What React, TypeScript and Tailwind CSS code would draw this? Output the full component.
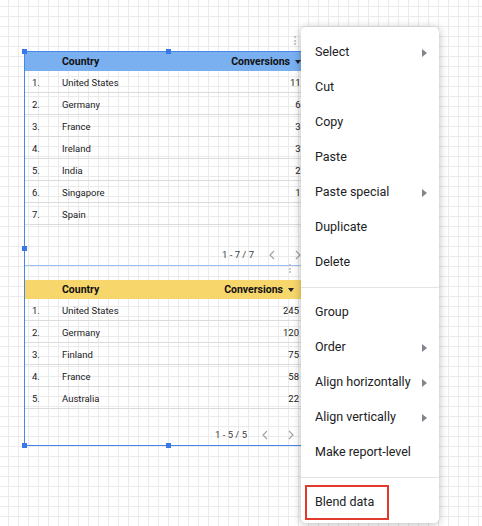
import React from "react";

type Row = { name: string; value: string };

const tableOne: Row[] = [
  { name: "United States", value: "114" },
  { name: "Germany", value: "63" },
  { name: "France", value: "35" },
  { name: "Ireland", value: "31" },
  { name: "India", value: "27" },
  { name: "Singapore", value: "12" },
  { name: "Spain", value: "8" },
];

const tableTwo: Row[] = [
  { name: "United States", value: "245" },
  { name: "Germany", value: "120" },
  { name: "Finland", value: "75" },
  { name: "France", value: "58" },
  { name: "Australia", value: "22" },
];

const menuTop = [
  { label: "Select", sub: true },
  { label: "Cut" },
  { label: "Copy" },
  { label: "Paste" },
  { label: "Paste special", sub: true },
  { label: "Duplicate" },
  { label: "Delete" },
];

const menuMid = [
  { label: "Group" },
  { label: "Order", sub: true },
  { label: "Align horizontally", sub: true },
  { label: "Align vertically", sub: true },
  { label: "Make report-level" },
];

function SortArrow() {
  return (
    <svg width="6" height="4" viewBox="0 0 6 4" className="ml-[5px]">
      <path d="M0 0h6L3 4z" fill="#202124" />
    </svg>
  );
}

function Chevron({ dir }: { dir: "left" | "right" }) {
  return (
    <svg width="6" height="10" viewBox="0 0 6 10">
      <path
        d={dir === "left" ? "M5 1L1 5l4 4" : "M1 1l4 4-4 4"}
        fill="none"
        stroke="#9aa0a6"
        strokeWidth="1.1"
      />
    </svg>
  );
}

function Handle() {
  return <div className="w-[5px] h-[5px] bg-[#3b78e7]" />;
}

function DragDots() {
  return (
    <div className="flex flex-col gap-[1.5px]">
      <div className="w-[2px] h-[2px] rounded-full bg-[#b8b8b8]" />
      <div className="w-[2px] h-[2px] rounded-full bg-[#b8b8b8]" />
      <div className="w-[2px] h-[2px] rounded-full bg-[#b8b8b8]" />
    </div>
  );
}

function DataTable({
  rows,
  headerBg,
  width,
  gapAfterRows,
  range,
}: {
  rows: Row[];
  headerBg: string;
  width: string;
  gapAfterRows: string;
  range: string;
}) {
  return (
    <div className={width}>
      {/* HEADER */}
      <div className={`flex items-center h-[19px] pr-[11px] ${headerBg}`}>
        <div className="w-[37px]" />
        <div className="flex-1 text-[10.5px] font-bold text-[#111]">Country</div>
        <div className="flex items-center text-[10.5px] font-bold text-[#111]">
          Conversions
          <SortArrow />
        </div>
      </div>

      {/* ROWS */}
      {rows.map((r, i) => (
        <div
          key={r.name}
          className="flex items-center h-[22px] pt-[3px] border-b border-[#dcdcdc] text-[9.5px] text-[#202124] pr-[6px]"
        >
          <div className="w-[37px] pl-[7px]">{i + 1}.</div>
          <div className="flex-1">{r.name}</div>
          <div>{r.value}</div>
        </div>
      ))}

      {/* PAGINATION */}
      <div className={`flex items-center justify-end h-[20px] pr-[11px] ${gapAfterRows}`}>
        <span className="text-[9.5px] text-[#3c4043]">{range}</span>
        <div className="ml-[15px]">
          <Chevron dir="left" />
        </div>
        <div className="ml-[20px]">
          <Chevron dir="right" />
        </div>
      </div>
    </div>
  );
}

function MenuItem({ label, sub }: { label: string; sub?: boolean }) {
  return (
    <div className="flex items-center h-[35px] pl-[14px] pr-[12px]">
      <span className="flex-1">{label}</span>
      {sub && (
        <svg width="5" height="8" viewBox="0 0 5 8">
          <path d="M0 0l5 4-5 4z" fill="#80868b" />
        </svg>
      )}
    </div>
  );
}

export default function App() {
  return (
    <div
      className="relative w-[482px] h-[526px] overflow-hidden bg-white bg-[linear-gradient(to_right,#ebebeb_1px,transparent_1px),linear-gradient(to_bottom,#ebebeb_1px,transparent_1px)] bg-[size:10px_10px] bg-[position:8px_6px] pl-[24px] pt-[51px]"
      style={{ fontFamily: "Roboto, 'Liberation Sans', sans-serif" }}
    >
      {/* SELECTION FRAME */}
      <div className="relative w-[289px] border border-[#4a86e8]">
        <DataTable
          rows={tableOne}
          headerBg="bg-[#7aaff0]"
          width="w-[287px]"
          gapAfterRows="mt-[20px]"
          range="1 - 7 / 7"
        />
        <div className="w-[280px] h-px bg-[#9fc0f5]" />
        <div className="h-[14px]" />
        <DataTable
          rows={tableTwo}
          headerBg="bg-[#f7d66c]"
          width="w-[280px]"
          gapAfterRows="mt-[16px]"
          range="1 - 5 / 5"
        />

        {/* HANDLES */}
        <div className="absolute -left-[3px] -top-[3px]"><Handle /></div>
        <div className="absolute left-[141px] -top-[3px]"><Handle /></div>
        <div className="absolute -left-[3px] top-[194px]"><Handle /></div>
        <div className="absolute -left-[3px] -bottom-[3px]"><Handle /></div>
        <div className="absolute left-[141px] -bottom-[3px]"><Handle /></div>

        {/* DRAG HANDLES */}
        <div className="absolute left-[269px] -top-[16px]"><DragDots /></div>
        <div className="absolute left-[264px] top-[212px]"><DragDots /></div>
      </div>

      {/* CONTEXT MENU */}
      <div className="absolute left-[301px] top-[27px] w-[138px] h-[496px] bg-white rounded-[5px] shadow-[0_1px_8px_rgba(0,0,0,0.28)] pt-[8px] text-[12.5px] text-[#202124]">
        {menuTop.map((m) => (
          <MenuItem key={m.label} {...m} />
        ))}
        <div className="my-[7px] h-px bg-[#e3e3e3]" />
        {menuMid.map((m) => (
          <MenuItem key={m.label} {...m} />
        ))}
        <div className="my-[7px] h-px bg-[#e3e3e3]" />
        <div className="flex items-center h-[35px] pl-[4px]">
          <div className="flex items-center w-[84px] h-[35px] border-2 border-[#e23b2c] pl-[8px]">
            Blend data
          </div>
        </div>
      </div>
    </div>
  );
}
